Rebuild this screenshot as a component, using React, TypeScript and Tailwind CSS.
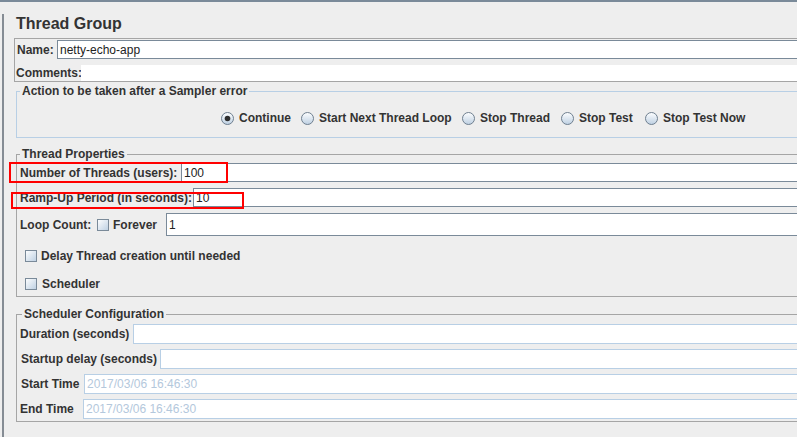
import React, { useId } from 'react';

// Swing "Ocean" look: light gray panels, gray-blue control borders
const Radio = ({ checked = false }: { checked?: boolean }) => {
  const id = useId();
  return (
    <svg width="13" height="13" viewBox="0 0 13 13" className="shrink-0">
      <defs>
        <linearGradient id={id} x1="0" y1="0" x2="0" y2="1">
          <stop offset="0" stopColor="#ffffff" />
          <stop offset="1" stopColor="#bccfe2" />
        </linearGradient>
      </defs>
      <circle cx="6.5" cy="6.5" r="6" fill={`url(#${id})`} stroke="#6f7f8f" strokeWidth="1" />
      {checked && <circle cx="6.5" cy="6.5" r="2.8" fill="#2e2e2e" />}
    </svg>
  );
};

const Checkbox = () => {
  const id = useId();
  return (
    <svg width="12" height="12" viewBox="0 0 12 12" className="shrink-0">
      <defs>
        <linearGradient id={id} x1="0" y1="0" x2="1" y2="1">
          <stop offset="0" stopColor="#ffffff" />
          <stop offset="1" stopColor="#bccfe2" />
        </linearGradient>
      </defs>
      <rect x="0.5" y="0.5" width="11" height="11" fill={`url(#${id})`} stroke="#7a8a99" />
    </svg>
  );
};

const TextField = ({ value, className = '' }: { value?: string; className?: string }) => (
  <div
    className={`flex-1 h-full bg-white border border-r-0 border-[#7a8a99] pl-[2px] pt-[1px] flex items-center font-normal text-[#222222] ${className}`}
  >
    {value}
  </div>
);

const DisabledField = ({ value }: { value?: string }) => (
  <div className="flex-1 h-full bg-white border border-r-0 border-[#b8cfe5] pl-[2px] flex items-center font-normal text-[#b4c8dc]">
    {value}
  </div>
);

const RadioItem = ({ label, width, checked }: { label: string; width: string; checked?: boolean }) => (
  <div className={`flex items-center gap-[5px] ${width}`}>
    <Radio checked={checked} />
    <span>{label}</span>
  </div>
);

export default function App() {
  return (
    <div className="w-[797px] h-[437px] overflow-hidden bg-[#eeeeee] border-t-2 border-[#7a8a99] font-['Liberation_Sans',Arial,sans-serif] text-[12px] leading-[16px] font-bold text-[#333333]">
      <div className="ml-[2px] h-full w-[920px] border-l-2 border-[#858c94] pl-[10px]">
        <div className="mt-[12px] ml-[2px] text-[16px] leading-[20px]">Thread Group</div>

        {/* name / comments */}
        <div className="mt-[4px] border border-r-0 border-[#a5a5a5] pl-[1px] pt-[1px]">
          <div className="flex items-center h-[19px]">
            <span className="w-[41px] shrink-0 pl-[1px]">Name:</span>
            <TextField value="netty-echo-app" className="pl-[1px]" />
          </div>
          <div className="flex items-center h-[16px] mt-[6px]">
            <span className="w-[65px] shrink-0">Comments:</span>
            <div className="flex-1 h-full bg-white" />
          </div>
        </div>

        <fieldset className="ml-[2px] mt-[1px] border border-r-0 border-[#b8cfe5] pb-[11px]">
          <legend className="ml-[3px] px-[2px]">Action to be taken after a Sampler error</legend>
          <div className="flex items-center h-[16px] mt-[11px] pl-[204px]">
            <RadioItem label="Continue" width="w-[80px]" checked />
            <RadioItem label="Start Next Thread Loop" width="w-[161px]" />
            <RadioItem label="Stop Thread" width="w-[99px]" />
            <RadioItem label="Stop Test" width="w-[84px]" />
            <RadioItem label="Stop Test Now" width="w-[120px]" />
          </div>
        </fieldset>

        <fieldset className="ml-[2px] mt-[8px] border border-r-0 border-[#a5a5a5] pl-[3px] pb-[4px]">
          <legend className="px-[2px]">Thread Properties</legend>
          <div className="relative flex items-center h-[19px] mt-[1px]">
            <span className="w-[161px] shrink-0 pt-[1px]">Number of Threads (users):</span>
            <TextField value="100" />
            <div className="absolute left-[-11px] top-[-1px] w-[219px] h-[21px] border-2 border-[#ff0000]" />
          </div>
          <div className="relative flex items-center h-[19px] mt-[6px]">
            <span className="w-[173px] shrink-0 pt-[1px]">Ramp-Up Period (in seconds):</span>
            <TextField value="10" />
            <div className="absolute left-[-9px] top-[4px] w-[233px] h-[17px] border-2 border-[#ff0000]" />
          </div>
          <div className="flex items-center h-[23px] mt-[6px]">
            <span className="w-[77px] shrink-0 pt-[1px]">Loop Count:</span>
            <Checkbox />
            <span className="ml-[4px] w-[53px] shrink-0 pt-[1px]">Forever</span>
            <TextField value="1" className="pl-[1px]" />
          </div>
          <div className="flex items-center h-[16px] mt-[12px] pl-[5px]">
            <Checkbox />
            <span className="ml-[4px]">Delay Thread creation until needed</span>
          </div>
          <div className="flex items-center h-[16px] mt-[12px] pl-[5px]">
            <Checkbox />
            <span className="ml-[5px]">Scheduler</span>
          </div>
        </fieldset>

        <fieldset className="ml-[2px] mt-[9px] border border-r-0 border-[#a5a5a5] pl-[3px] pb-[2px]">
          <legend className="ml-[2px] px-[2px]">Scheduler Configuration</legend>
          <div className="flex items-center h-[20px] mt-[2px]">
            <span className="w-[113px] shrink-0">Duration (seconds)</span>
            <DisabledField />
          </div>
          <div className="flex items-center h-[20px] mt-[5px]">
            <span className="w-[140px] shrink-0 pl-[1px]">Startup delay (seconds)</span>
            <DisabledField />
          </div>
          <div className="flex items-center h-[20px] mt-[5px]">
            <span className="w-[64px] shrink-0 pl-[1px]">Start Time</span>
            <DisabledField value="2017/03/06 16:46:30" />
          </div>
          <div className="flex items-center h-[20px] mt-[5px]">
            <span className="w-[63px] shrink-0">End Time</span>
            <DisabledField value="2017/03/06 16:46:30" />
          </div>
        </fieldset>
      </div>
    </div>
  );
}
